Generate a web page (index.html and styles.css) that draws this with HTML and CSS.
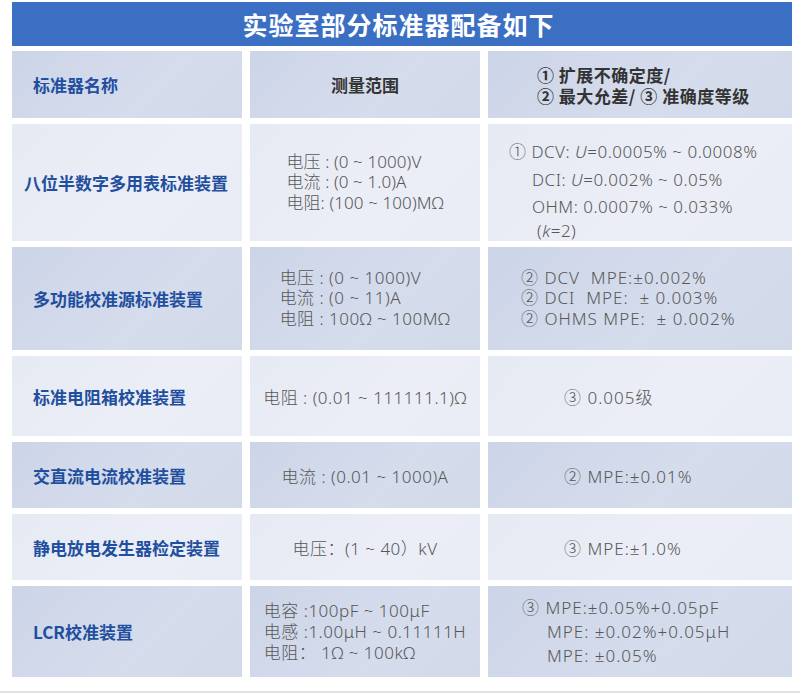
FILE: index.html
```html
<!DOCTYPE html>
<html lang="zh-CN">
<head>
<meta charset="utf-8">
<title>实验室部分标准器配备如下</title>
<link rel="stylesheet" href="styles.css">
</head>
<body>
<div class="page">
  <div class="title">实验室部分标准器配备如下</div>
  <div class="table">
    <div class="cell name head dark">标准器名称</div>
    <div class="cell range head-c dark"><span class="hd">测量范围</span></div>
    <div class="cell acc head-c dark p-h">
      <div class="hd hd3">
        <div>① 扩展不确定度/</div>
        <div>② 最大允差/ ③ 准确度等级</div>
      </div>
    </div>

    <div class="cell name light wide">八位半数字多用表标准装置</div>
    <div class="cell range light tight">
      <div class="lines l20">
        <div>电压 : (0 ~ 1000)V</div>
        <div>电流 : (0 ~ 1.0)A</div>
        <div>电阻: (100 ~ 100)MΩ</div>
      </div>
    </div>
    <div class="cell acc light top p-r2 tight">
      <div class="lines l27">
        <div>① DCV: <i>U</i>=0.0005% ~ 0.0008%</div>
        <div class="ind23">DCI: <i>U</i>=0.002% ~ 0.05%</div>
        <div class="ind23">OHM: 0.0007% ~ 0.033%</div>
        <div class="ind28 last">(<i>k</i>=2)</div>
      </div>
    </div>

    <div class="cell name dark">多功能校准源标准装置</div>
    <div class="cell range dark">
      <div class="lines l20">
        <div>电压 : (0 ~ 1000)V</div>
        <div>电流 : (0 ~ 11)A</div>
        <div>电阻 : 100Ω ~ 100MΩ</div>
      </div>
    </div>
    <div class="cell acc dark p-r3">
      <div class="lines l20">
        <div>② DCV&nbsp; MPE:±0.002%</div>
        <div>② DCI&nbsp; MPE: &nbsp;± 0.003%</div>
        <div>② OHMS MPE: &nbsp;± 0.002%</div>
      </div>
    </div>

    <div class="cell name light">标准电阻箱校准装置</div>
    <div class="cell range light">电阻 : (0.01 ~ 111111.1)Ω</div>
    <div class="cell acc light p-r4">③ 0.005级</div>

    <div class="cell name dark">交直流电流校准装置</div>
    <div class="cell range dark">电流 : (0.01 ~ 1000)A</div>
    <div class="cell acc dark p-r4">② MPE:±0.01%</div>

    <div class="cell name light">静电放电发生器检定装置</div>
    <div class="cell range light">电压：(1 ~ 40）kV</div>
    <div class="cell acc light p-r4">③ MPE:±1.0%</div>

    <div class="cell name dark">LCR校准装置</div>
    <div class="cell range dark">
      <div class="lines l21">
        <div>电容 :100pF ~ 100μF</div>
        <div>电感 :1.00μH ~ 0.11111H</div>
        <div>电阻： 1Ω ~ 100kΩ</div>
      </div>
    </div>
    <div class="cell acc dark p-r7">
      <div class="lines l24">
        <div>③ MPE:±0.05%+0.05pF</div>
        <div class="ind25">MPE: ±0.02%+0.05μH</div>
        <div class="ind25">MPE: ±0.05%</div>
      </div>
    </div>
  </div>
  <div class="edge"></div>
</div>
</body>
</html>
```

FILE: styles.css
```css
html, body {
  margin: 0;
  padding: 0;
  background: #ffffff;
}

.page {
  width: 800px;
  height: 693px;
  position: relative;
  padding: 2px 8px 0 12px;
  box-sizing: border-box;
  font-family: "Noto Sans", "Noto Sans CJK SC", sans-serif;
}

.title {
  height: 44px;
  padding-right: 7px;
  background: #3b6fc4;
  color: #ffffff;
  font-family: "Noto Sans CJK SC", sans-serif;
  font-weight: 700;
  font-size: 25px;
  letter-spacing: 1px;
  display: flex;
  align-items: center;
  justify-content: center;
}

.table {
  margin-top: 5px;
  display: grid;
  grid-template-columns: 230px 230px 304px;
  grid-template-rows: 67px 117px 103px 80px 66px 66px 91px;
  column-gap: 8px;
  row-gap: 6px;
}

.cell {
  display: flex;
  align-items: center;
  color: #575757;
  font-size: 17px;
  font-weight: 300;
  box-sizing: border-box;
}

.dark {
  background: linear-gradient(135deg, #ccd5e8 0%, #d5dcec 60%, #d2daea 100%);
}

.light {
  background: linear-gradient(135deg, #e6eaf3 0%, #ebeef6 60%, #e8ecf4 100%);
}

.name {
  padding-left: 21px;
  color: #1f4f9e;
  font-family: "Noto Sans CJK SC", sans-serif;
  font-weight: 700;
  font-size: 17px;
}

.name.wide {
  padding-left: 12px;
}

.range {
  justify-content: center;
  letter-spacing: 0.5px;
}

.acc {
  letter-spacing: 1px;
}

.range.tight {
  letter-spacing: 0.1px;
}

.acc.tight {
  letter-spacing: 0.5px;
}

.hd {
  color: #333333;
  font-family: "Noto Sans CJK SC", sans-serif;
  font-weight: 700;
  font-size: 17px;
  letter-spacing: 0;
  line-height: 21px;
}

.hd3 {
  letter-spacing: 0.5px;
}

.head-c {
  justify-content: center;
}

.p-h {
  justify-content: flex-start;
  padding-left: 49px;
}

.top {
  align-items: flex-start;
  padding-top: 14px;
}

.p-r2 { padding-left: 21px; }
.p-r3 { padding-left: 33px; }
.p-r4 { padding-left: 76px; }
.p-r7 { padding-left: 34px; }

.lines { white-space: nowrap; }
.l20 { line-height: 20.5px; }
.l21 { line-height: 21px; }
.l24 { line-height: 24px; }
.l27 { line-height: 27.5px; }

.ind23 { padding-left: 23px; }
.ind25 { padding-left: 25px; }
.ind28 { padding-left: 28px; }
.last { line-height: 23px; margin-top: -2px; }

.lines i { font-style: italic; }

.edge {
  position: absolute;
  left: 0;
  right: 0;
  bottom: 0;
  height: 2px;
  background: #e4e1dc;
}
```
